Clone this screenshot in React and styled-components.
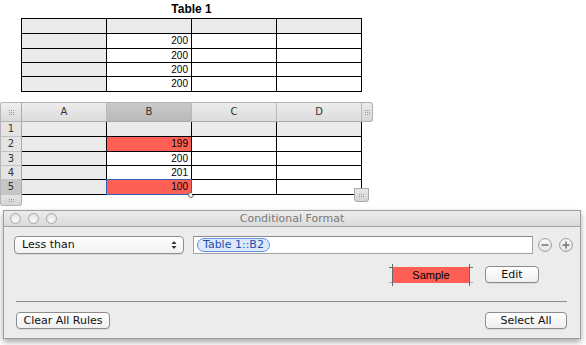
import React from "react";
import styled, { createGlobalStyle } from "styled-components";

const Global = createGlobalStyle`
  html, body { margin: 0; padding: 0; background: #fff; }
  body { width: 586px; height: 345px; overflow: hidden; font-family: "Liberation Sans", Arial, sans-serif; }
  * { box-sizing: border-box; }
`;

const Page = styled.div`
  display: flex;
  flex-direction: column;
  width: 586px;
  height: 345px;
`;

const TableTitle = styled.div`
  width: 341px;
  margin-left: 21px;
  height: 18px;
  padding-top: 2px;
  text-align: center;
  font: bold 12px/14px "Liberation Sans", Arial, sans-serif;
  color: #000;
`;

const PlainTable = styled.div`
  display: grid;
  grid-template-columns: repeat(4, 85px);
  width: 341px;
  margin-left: 21px;
  border-left: 1px solid #000;
  border-top: 1px solid #000;
`;

const Cell = styled.div`
  height: ${(p) => p.$h}px;
  border-right: 1px solid #000;
  border-bottom: 1px solid #000;
  background: ${(p) => (p.$fill ? p.$fill : p.$head ? "#ebebeb" : "#fff")};
  font: 10px/13px "Liberation Sans", Arial, sans-serif;
  color: #000;
  text-align: right;
  padding-right: 3px;
  position: relative;
`;

const Sheet = styled.div`
  position: relative;
  margin-top: 10px;
  display: grid;
  grid-template-columns: 22px repeat(4, 85px) 12px;
  width: 374px;
`;

const Corner = styled.div`
  height: 20px;
  border: 1px solid #b4b4b4;
  border-right-color: #a9a9a9;
  border-radius: 3px 0 0 0;
  background: linear-gradient(#efefef, #dadada);
  display: flex;
  align-items: center;
  justify-content: center;
`;

const ColHead = styled.div`
  height: 20px;
  border-top: 1px solid #b4b4b4;
  border-bottom: 1px solid #a9a9a9;
  border-right: 1px solid #b9b9b9;
  background: ${(p) =>
    p.$sel ? "linear-gradient(#c9c9c9, #b9b9b9)" : "linear-gradient(#ececec, #dcdcdc)"};
  font: 10px/18px "DejaVu Sans", sans-serif;
  color: #333;
  text-align: center;
`;

const RightTab = styled.div`
  height: 20px;
  width: 11px;
  border: 1px solid #b0b0b0;
  border-left: none;
  border-radius: 0 3px 3px 0;
  background: linear-gradient(#ececec, #d8d8d8);
  display: flex;
  align-items: center;
  justify-content: center;
`;

const RowHead = styled.div`
  height: ${(p) => p.$h}px;
  border-left: 1px solid #b4b4b4;
  border-right: 1px solid #a9a9a9;
  border-bottom: 1px solid #c3c3c3;
  background: ${(p) => (p.$sel ? "#c6c6c6" : "#e4e4e4")};
  font: 10px/13px "DejaVu Sans", sans-serif;
  color: #333;
  text-align: center;
`;

const Spacer = styled.div``;

const BottomTab = styled.div`
  height: 11px;
  border: 1px solid #b4b4b4;
  border-top: none;
  border-radius: 0 0 3px 3px;
  background: linear-gradient(#e4e4e4, #d6d6d6);
  display: flex;
  align-items: center;
  justify-content: center;
`;

const SelBox = styled.div`
  position: absolute;
  left: -1px;
  top: -1px;
  right: -1px;
  bottom: -1px;
  border: 1px solid #2f63b8;
  pointer-events: none;
`;

const SelKnob = styled.div`
  position: absolute;
  right: -3px;
  bottom: -4px;
  width: 6px;
  height: 6px;
  border-radius: 50%;
  background: #fff;
  border: 1px solid #6a6a6a;
`;

const ResizeHandle = styled.div`
  position: absolute;
  left: 354px;
  top: 86px;
  width: 15px;
  height: 14px;
  border: 1px solid #a9a9a9;
  border-radius: 0 0 3px 3px;
  background: linear-gradient(#e8e8e8, #d4d4d4);
  display: flex;
  align-items: center;
  justify-content: center;
`;

const Panel = styled.div`
  margin-top: 4px;
  margin-left: 3px;
  width: 578px;
  height: 129px;
  border: 1px solid #9d9d9d;
  background: #ececec;
  box-shadow: 0 3px 6px rgba(0, 0, 0, 0.35);
  display: flex;
  flex-direction: column;
`;

const TitleBar = styled.div`
  height: 16px;
  flex-shrink: 0;
  border-bottom: 1px solid #a3a3a3;
  background: linear-gradient(#ececec, #dadada);
  position: relative;
  display: flex;
  align-items: center;
  justify-content: center;
  font: 11px/15px "DejaVu Sans", sans-serif;
  color: #7a7a7a;
`;

const Lights = styled.div`
  position: absolute;
  left: 6px;
  top: 2px;
  display: flex;
  gap: 7px;
`;

const Light = styled.div`
  width: 11px;
  height: 11px;
  border-radius: 50%;
  border: 1px solid #a9a9a9;
  background: radial-gradient(circle at 50% 70%, #fafafa, #dcdcdc);
`;

const Body = styled.div`
  flex: 1;
  display: flex;
  flex-direction: column;
  padding: 9px 7px 0 10px;
  font: 11px "DejaVu Sans", sans-serif;
  color: #111;
`;

const RuleRow = styled.div`
  display: flex;
  align-items: center;
  height: 18px;
`;

const Popup = styled.div`
  flex-shrink: 0;
  width: 170px;
  height: 18px;
  border: 1px solid #8f8f8f;
  border-radius: 4px;
  background: linear-gradient(#ffffff, #f1f1f1);
  box-shadow: 0 1px 0 rgba(0, 0, 0, 0.08);
  display: flex;
  align-items: center;
  justify-content: space-between;
  padding: 0 6px 0 7px;
  line-height: 16px;
`;

const Field = styled.div`
  flex-shrink: 0;
  margin-left: 9px;
  width: 340px;
  height: 18px;
  border: 1px solid #a2a2a2;
  border-top-color: #8a8a8a;
  background: #fff;
  display: flex;
  align-items: center;
  padding-left: 3px;
`;

const Token = styled.span`
  height: 14px;
  padding: 0 5px;
  border: 1px solid #5f92e3;
  border-radius: 7px;
  background: #dde8fb;
  color: #1e4fae;
  line-height: 12px;
`;

const RoundBtns = styled.div`
  display: flex;
  gap: 7px;
  margin-left: 5px;
`;

const FormatRow = styled.div`
  display: flex;
  align-items: center;
  justify-content: flex-end;
  margin-top: 12px;
  margin-right: 34px;
  gap: 15px;
`;

const Swatch = styled.div`
  position: relative;
  width: 78px;
  height: 16px;
  background: #fd5f55;
  display: flex;
  align-items: center;
  justify-content: center;
  font: 11px "Liberation Sans", Arial, sans-serif;
  color: #000;
  &::before {
    content: "";
    position: absolute;
    left: 0;
    right: 0;
    top: -3px;
    bottom: -3px;
    border-left: 1px solid #6a6a6a;
    border-right: 1px solid #6a6a6a;
  }
  &::after {
    content: "";
    position: absolute;
    left: -3px;
    right: -3px;
    top: 0;
    bottom: 0;
    border-top: 1px solid #6a6a6a;
    border-bottom: 1px solid #6a6a6a;
    clip-path: polygon(0 0, 4px 0, 4px 100%, 0 100%, 0 0, 100% 0, 100% 100%, calc(100% - 4px) 100%, calc(100% - 4px) 0);
  }
`;

const Button = styled.div`
  flex-shrink: 0;
  width: ${(p) => p.$w}px;
  height: 17px;
  border: 1px solid #8c8c8c;
  border-radius: 4px;
  background: linear-gradient(#ffffff, #efefef);
  box-shadow: 0 1px 0 rgba(0, 0, 0, 0.08);
  display: flex;
  align-items: center;
  justify-content: center;
  line-height: 15px;
  color: #111;
`;

const Separator = styled.div`
  margin: 18px 6px 0 2px;
  height: 1px;
  background: #8d8d8d;
`;

const BottomRow = styled.div`
  display: flex;
  justify-content: space-between;
  margin: 10px 6px 0 2px;
`;

const Grip = ({ rows = 3 }) => (
  <svg width="7" height={rows * 2 + 1} viewBox={`0 0 7 ${rows * 2 + 1}`}>
    {Array.from({ length: rows }).map((_, r) =>
      [0, 2, 4].map((c) => (
        <rect key={`${r}-${c}`} x={c + 1} y={r * 2 + 1} width="1" height="1" fill="#9a9a9a" />
      ))
    )}
  </svg>
);

const RoundIcon = ({ plus }) => (
  <svg width="14" height="14" viewBox="0 0 14 14">
    <defs>
      <linearGradient id={plus ? "gp" : "gm"} x1="0" y1="0" x2="0" y2="1">
        <stop offset="0" stopColor="#fbfbfb" />
        <stop offset="1" stopColor="#e4e4e4" />
      </linearGradient>
    </defs>
    <circle cx="7" cy="7" r="6.4" fill={`url(#${plus ? "gp" : "gm"})`} stroke="#9a9a9a" strokeWidth="1" />
    <rect x="3.5" y="6.2" width="7" height="1.6" fill="#7a7a7a" />
    {plus && <rect x="6.2" y="3.5" width="1.6" height="7" fill="#7a7a7a" />}
  </svg>
);

const Arrows = () => (
  <svg width="6" height="10" viewBox="0 0 6 10">
    <path d="M3 1 L5.5 4 L0.5 4 Z" fill="#333" />
    <path d="M3 9 L5.5 6 L0.5 6 Z" fill="#333" />
  </svg>
);

const heights = [15, 15, 14, 14, 15];

export default function App() {
  const top = [null, "200", "200", "200", "200"];
  const sheet = [
    { v: "", fill: null },
    { v: "199", fill: "#fd5f55" },
    { v: "200", fill: null },
    { v: "201", fill: null },
    { v: "100", fill: "#fd5f55", sel: true },
  ];
  return (
    <Page>
      <Global />
      <TableTitle>Table 1</TableTitle>
      <PlainTable>
        {top.map((v, r) =>
          [0, 1, 2, 3].map((c) => (
            <Cell key={`${r}-${c}`} $h={heights[r]} $head={r === 0 || c === 0}>
              {c === 1 && v ? v : ""}
            </Cell>
          ))
        )}
      </PlainTable>

      <Sheet>
        <Corner>
          <Grip />
        </Corner>
        {["A", "B", "C", "D"].map((l) => (
          <ColHead key={l} $sel={l === "B"}>
            {l}
          </ColHead>
        ))}
        <RightTab>
          <Grip />
        </RightTab>
        {sheet.map((row, r) => (
          <React.Fragment key={r}>
            <RowHead $h={heights[r]} $sel={r === 4}>
              {r + 1}
            </RowHead>
            {[0, 1, 2, 3].map((c) => (
              <Cell
                key={c}
                $h={heights[r]}
                $head={r === 0 || c === 0}
                $fill={c === 1 ? row.fill : null}
              >
                {c === 1 ? row.v : ""}
                {c === 1 && row.sel && (
                  <>
                    <SelBox />
                    <SelKnob />
                  </>
                )}
              </Cell>
            ))}
            <Spacer />
          </React.Fragment>
        ))}
        <BottomTab>
          <Grip rows={2} />
        </BottomTab>
        <ResizeHandle>
          <Grip rows={2} />
        </ResizeHandle>
      </Sheet>

      <Panel>
        <TitleBar>
          <Lights>
            <Light />
            <Light />
            <Light />
          </Lights>
          Conditional Format
        </TitleBar>
        <Body>
          <RuleRow>
            <Popup>
              <span>Less than</span>
              <Arrows />
            </Popup>
            <Field>
              <Token>Table 1::B2</Token>
            </Field>
            <RoundBtns>
              <RoundIcon />
              <RoundIcon plus />
            </RoundBtns>
          </RuleRow>
          <FormatRow>
            <Swatch>Sample</Swatch>
            <Button $w={54}>Edit</Button>
          </FormatRow>
          <Separator />
          <BottomRow>
            <Button $w={94}>Clear All Rules</Button>
            <Button $w={82}>Select All</Button>
          </BottomRow>
        </Body>
      </Panel>
    </Page>
  );
}
